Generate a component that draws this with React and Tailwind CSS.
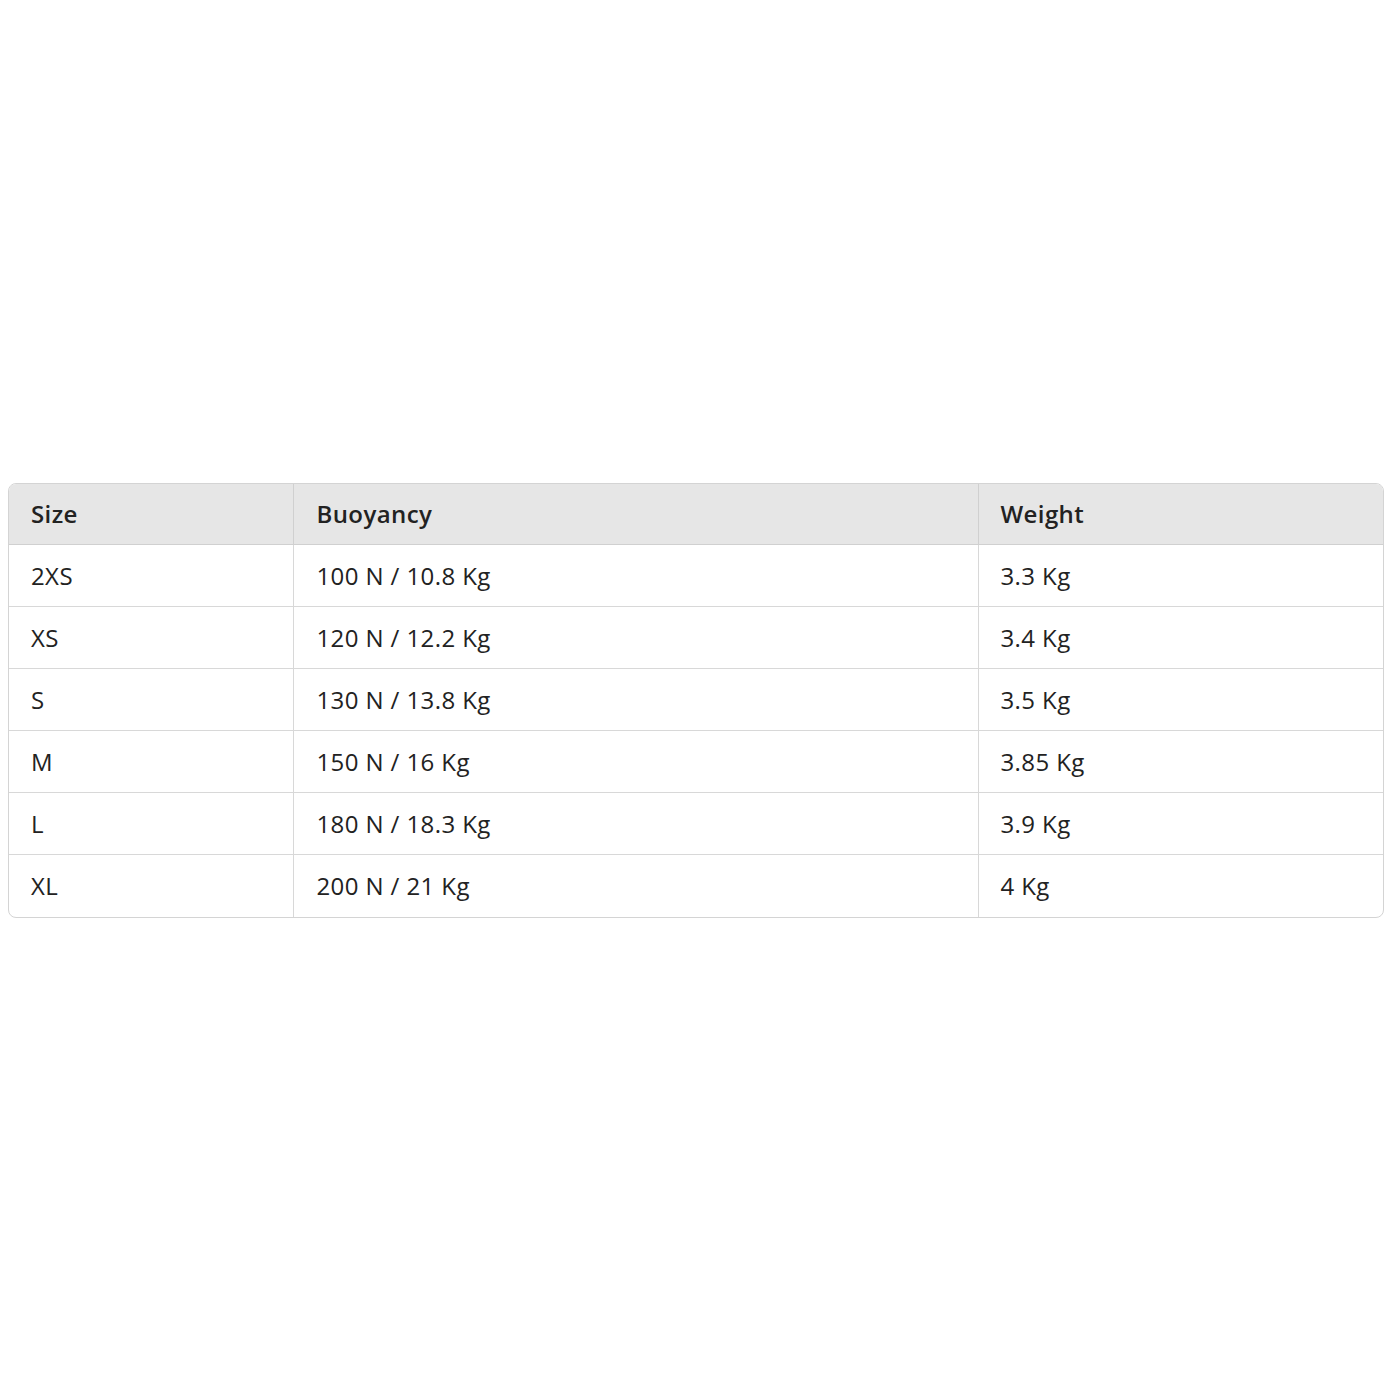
const rows = [
  ["2XS", "100 N / 10.8 Kg", "3.3 Kg"],
  ["XS", "120 N / 12.2 Kg", "3.4 Kg"],
  ["S", "130 N / 13.8 Kg", "3.5 Kg"],
  ["M", "150 N / 16 Kg", "3.85 Kg"],
  ["L", "180 N / 18.3 Kg", "3.9 Kg"],
  ["XL", "200 N / 21 Kg", "4 Kg"],
];

export default function App() {
  return (
    <div className="min-h-[1400px] bg-white flex items-center pl-2 pr-4 font-['Open_Sans',sans-serif] text-[#222]">
      {/* size chart */}
      <div className="w-full rounded-lg border border-[#d4d4d4] overflow-hidden">
        <table className="w-full border-collapse table-fixed text-[24px] tracking-[0.4px] leading-none">
          <colgroup>
            <col className="w-[284px]" />
            <col className="w-[685px]" />
            <col />
          </colgroup>
          <thead>
            <tr className="bg-[#e6e6e6] h-[61px]">
              <th className="text-left font-semibold pl-[22px] border-r border-b border-[#d0d0d0]">Size</th>
              <th className="text-left font-semibold pl-[23px] border-r border-b border-[#d0d0d0]">Buoyancy</th>
              <th className="text-left font-semibold pl-[22px] border-b border-[#d0d0d0]">Weight</th>
            </tr>
          </thead>
          <tbody>
            {rows.map((r, i) => (
              <tr key={r[0]} className="h-[62px]">
                <td className={`pl-[22px] border-r border-[#d8d8d8] ${i < rows.length - 1 ? "border-b" : ""}`}>{r[0]}</td>
                <td className={`pl-[23px] border-r border-[#d8d8d8] ${i < rows.length - 1 ? "border-b" : ""}`}>{r[1]}</td>
                <td className={`pl-[22px] border-[#d8d8d8] ${i < rows.length - 1 ? "border-b" : ""}`}>{r[2]}</td>
              </tr>
            ))}
          </tbody>
        </table>
      </div>
    </div>
  );
}
